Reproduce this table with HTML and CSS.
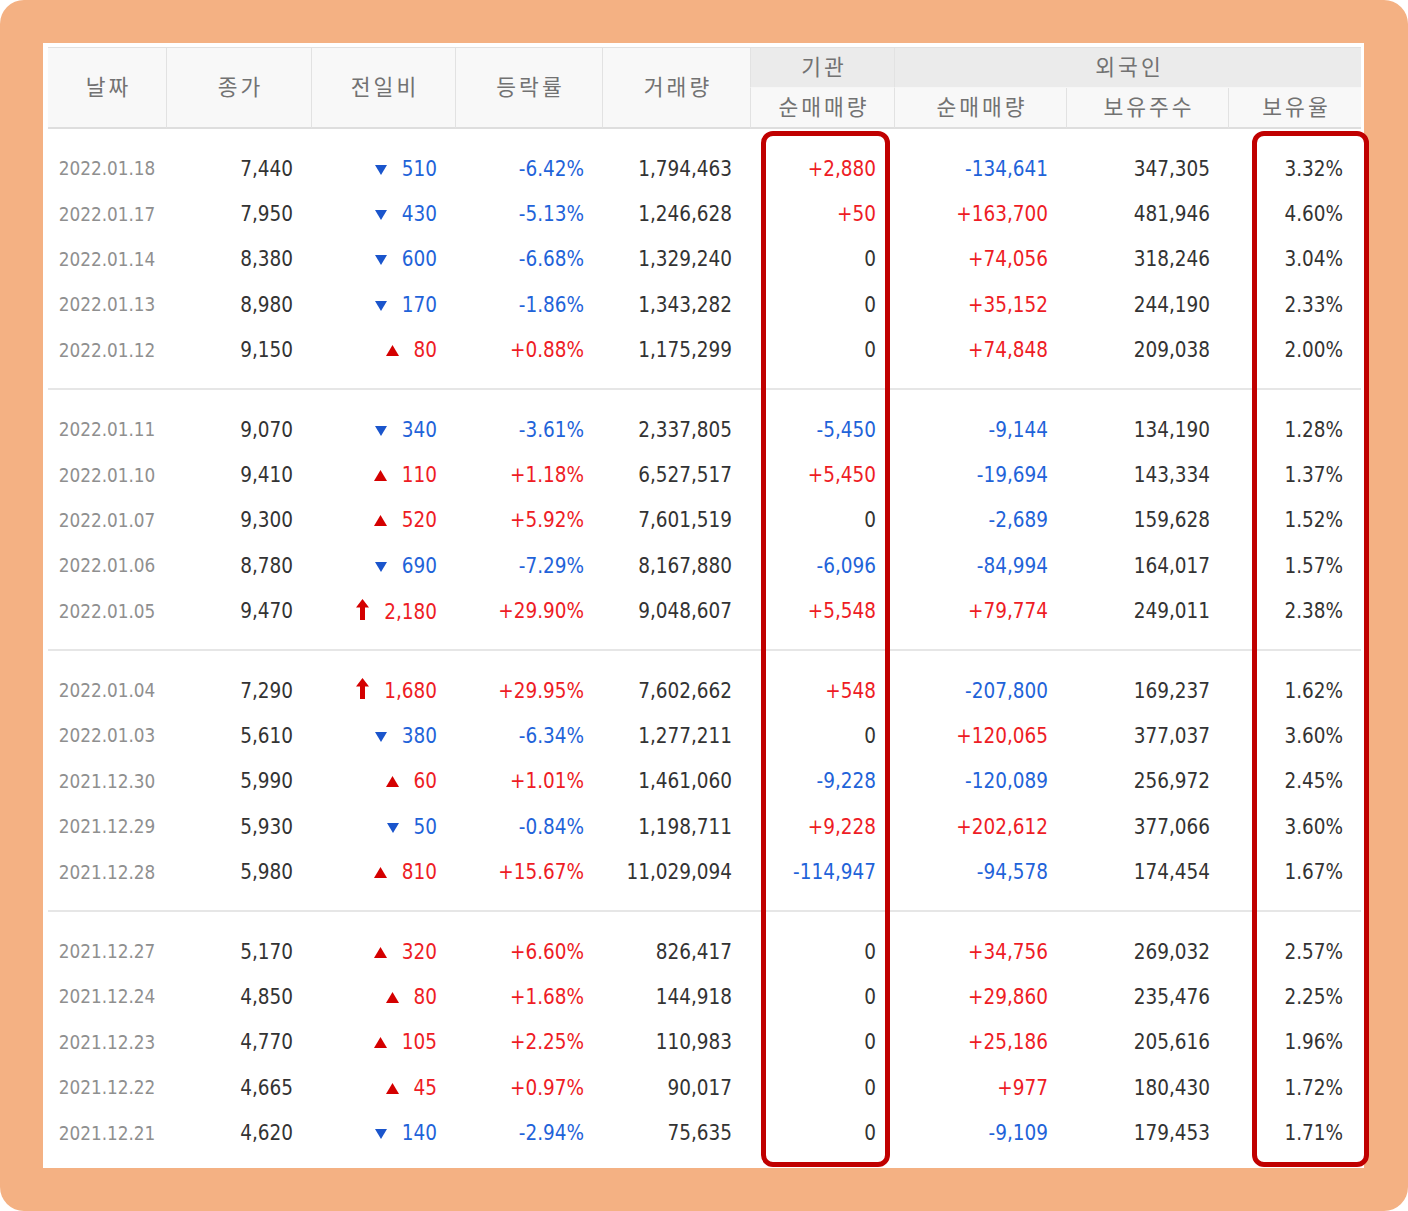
FILE: index.html
```html
<!DOCTYPE html>
<html lang="ko">
<head>
<meta charset="utf-8">
<title>외국인·기관 순매매 거래량</title>
<link rel="stylesheet" href="styles.css">
</head>
<body>
<div class="frame">
  <div class="panel">
    <table class="trade">
      <colgroup>
        <col class="c1"><col class="c2"><col class="c3"><col class="c4"><col class="c5"><col class="c6"><col class="c7"><col class="c8"><col class="c9">
      </colgroup>
      <thead>
        <tr class="h1">
          <th rowspan="2" class="first">날짜</th>
          <th rowspan="2">종가</th>
          <th rowspan="2">전일비</th>
          <th rowspan="2">등락률</th>
          <th rowspan="2">거래량</th>
          <th class="grp">기관</th>
          <th colspan="3" class="grp">외국인</th>
        </tr>
        <tr class="h2">
          <th>순매매량</th>
          <th>순매매량</th>
          <th>보유주수</th>
          <th>보유율</th>
        </tr>
      </thead>
      <tbody>
        <tr class="gap"><td colspan="9"></td></tr>
        <tr class="r"><td class="date">2022.01.18</td><td>7,440</td><td class="blue"><svg class="tri" width="12" height="10" viewBox="0 0 12 10"><path d="M0 0H12L6 10Z"/></svg>510</td><td class="blue">-6.42%</td><td>1,794,463</td><td class="red">+2,880</td><td class="blue">-134,641</td><td>347,305</td><td>3.32%</td></tr>
        <tr class="r"><td class="date">2022.01.17</td><td>7,950</td><td class="blue"><svg class="tri" width="12" height="10" viewBox="0 0 12 10"><path d="M0 0H12L6 10Z"/></svg>430</td><td class="blue">-5.13%</td><td>1,246,628</td><td class="red">+50</td><td class="red">+163,700</td><td>481,946</td><td>4.60%</td></tr>
        <tr class="r"><td class="date">2022.01.14</td><td>8,380</td><td class="blue"><svg class="tri" width="12" height="10" viewBox="0 0 12 10"><path d="M0 0H12L6 10Z"/></svg>600</td><td class="blue">-6.68%</td><td>1,329,240</td><td>0</td><td class="red">+74,056</td><td>318,246</td><td>3.04%</td></tr>
        <tr class="r"><td class="date">2022.01.13</td><td>8,980</td><td class="blue"><svg class="tri" width="12" height="10" viewBox="0 0 12 10"><path d="M0 0H12L6 10Z"/></svg>170</td><td class="blue">-1.86%</td><td>1,343,282</td><td>0</td><td class="red">+35,152</td><td>244,190</td><td>2.33%</td></tr>
        <tr class="r"><td class="date">2022.01.12</td><td>9,150</td><td class="red"><svg class="tri" width="13" height="11" viewBox="0 0 13 11"><path d="M6.5 0L13 11H0Z"/></svg>80</td><td class="red">+0.88%</td><td>1,175,299</td><td>0</td><td class="red">+74,848</td><td>209,038</td><td>2.00%</td></tr>
        <tr class="gap2"><td colspan="9"></td></tr>
        <tr class="sep"><td colspan="9"></td></tr>
      </tbody>
      <tbody>
        <tr class="gap"><td colspan="9"></td></tr>
        <tr class="r"><td class="date">2022.01.11</td><td>9,070</td><td class="blue"><svg class="tri" width="12" height="10" viewBox="0 0 12 10"><path d="M0 0H12L6 10Z"/></svg>340</td><td class="blue">-3.61%</td><td>2,337,805</td><td class="blue">-5,450</td><td class="blue">-9,144</td><td>134,190</td><td>1.28%</td></tr>
        <tr class="r"><td class="date">2022.01.10</td><td>9,410</td><td class="red"><svg class="tri" width="13" height="11" viewBox="0 0 13 11"><path d="M6.5 0L13 11H0Z"/></svg>110</td><td class="red">+1.18%</td><td>6,527,517</td><td class="red">+5,450</td><td class="blue">-19,694</td><td>143,334</td><td>1.37%</td></tr>
        <tr class="r"><td class="date">2022.01.07</td><td>9,300</td><td class="red"><svg class="tri" width="13" height="11" viewBox="0 0 13 11"><path d="M6.5 0L13 11H0Z"/></svg>520</td><td class="red">+5.92%</td><td>7,601,519</td><td>0</td><td class="blue">-2,689</td><td>159,628</td><td>1.52%</td></tr>
        <tr class="r"><td class="date">2022.01.06</td><td>8,780</td><td class="blue"><svg class="tri" width="12" height="10" viewBox="0 0 12 10"><path d="M0 0H12L6 10Z"/></svg>690</td><td class="blue">-7.29%</td><td>8,167,880</td><td class="blue">-6,096</td><td class="blue">-84,994</td><td>164,017</td><td>1.57%</td></tr>
        <tr class="r"><td class="date">2022.01.05</td><td>9,470</td><td class="red"><svg class="arrow" width="13" height="21" viewBox="0 0 13 21"><path d="M6.5 0L13 8.5H9V21H4V8.5H0Z"/></svg>2,180</td><td class="red">+29.90%</td><td>9,048,607</td><td class="red">+5,548</td><td class="red">+79,774</td><td>249,011</td><td>2.38%</td></tr>
        <tr class="gap2"><td colspan="9"></td></tr>
        <tr class="sep"><td colspan="9"></td></tr>
      </tbody>
      <tbody>
        <tr class="gap"><td colspan="9"></td></tr>
        <tr class="r"><td class="date">2022.01.04</td><td>7,290</td><td class="red"><svg class="arrow" width="13" height="21" viewBox="0 0 13 21"><path d="M6.5 0L13 8.5H9V21H4V8.5H0Z"/></svg>1,680</td><td class="red">+29.95%</td><td>7,602,662</td><td class="red">+548</td><td class="blue">-207,800</td><td>169,237</td><td>1.62%</td></tr>
        <tr class="r"><td class="date">2022.01.03</td><td>5,610</td><td class="blue"><svg class="tri" width="12" height="10" viewBox="0 0 12 10"><path d="M0 0H12L6 10Z"/></svg>380</td><td class="blue">-6.34%</td><td>1,277,211</td><td>0</td><td class="red">+120,065</td><td>377,037</td><td>3.60%</td></tr>
        <tr class="r"><td class="date">2021.12.30</td><td>5,990</td><td class="red"><svg class="tri" width="13" height="11" viewBox="0 0 13 11"><path d="M6.5 0L13 11H0Z"/></svg>60</td><td class="red">+1.01%</td><td>1,461,060</td><td class="blue">-9,228</td><td class="blue">-120,089</td><td>256,972</td><td>2.45%</td></tr>
        <tr class="r"><td class="date">2021.12.29</td><td>5,930</td><td class="blue"><svg class="tri" width="12" height="10" viewBox="0 0 12 10"><path d="M0 0H12L6 10Z"/></svg>50</td><td class="blue">-0.84%</td><td>1,198,711</td><td class="red">+9,228</td><td class="red">+202,612</td><td>377,066</td><td>3.60%</td></tr>
        <tr class="r"><td class="date">2021.12.28</td><td>5,980</td><td class="red"><svg class="tri" width="13" height="11" viewBox="0 0 13 11"><path d="M6.5 0L13 11H0Z"/></svg>810</td><td class="red">+15.67%</td><td>11,029,094</td><td class="blue">-114,947</td><td class="blue">-94,578</td><td>174,454</td><td>1.67%</td></tr>
        <tr class="gap2"><td colspan="9"></td></tr>
        <tr class="sep"><td colspan="9"></td></tr>
      </tbody>
      <tbody>
        <tr class="gap"><td colspan="9"></td></tr>
        <tr class="r"><td class="date">2021.12.27</td><td>5,170</td><td class="red"><svg class="tri" width="13" height="11" viewBox="0 0 13 11"><path d="M6.5 0L13 11H0Z"/></svg>320</td><td class="red">+6.60%</td><td>826,417</td><td>0</td><td class="red">+34,756</td><td>269,032</td><td>2.57%</td></tr>
        <tr class="r"><td class="date">2021.12.24</td><td>4,850</td><td class="red"><svg class="tri" width="13" height="11" viewBox="0 0 13 11"><path d="M6.5 0L13 11H0Z"/></svg>80</td><td class="red">+1.68%</td><td>144,918</td><td>0</td><td class="red">+29,860</td><td>235,476</td><td>2.25%</td></tr>
        <tr class="r"><td class="date">2021.12.23</td><td>4,770</td><td class="red"><svg class="tri" width="13" height="11" viewBox="0 0 13 11"><path d="M6.5 0L13 11H0Z"/></svg>105</td><td class="red">+2.25%</td><td>110,983</td><td>0</td><td class="red">+25,186</td><td>205,616</td><td>1.96%</td></tr>
        <tr class="r"><td class="date">2021.12.22</td><td>4,665</td><td class="red"><svg class="tri" width="13" height="11" viewBox="0 0 13 11"><path d="M6.5 0L13 11H0Z"/></svg>45</td><td class="red">+0.97%</td><td>90,017</td><td>0</td><td class="red">+977</td><td>180,430</td><td>1.72%</td></tr>
        <tr class="r"><td class="date">2021.12.21</td><td>4,620</td><td class="blue"><svg class="tri" width="12" height="10" viewBox="0 0 12 10"><path d="M0 0H12L6 10Z"/></svg>140</td><td class="blue">-2.94%</td><td>75,635</td><td>0</td><td class="blue">-9,109</td><td>179,453</td><td>1.71%</td></tr>
        <tr class="gap2"><td colspan="9"></td></tr>
      </tbody>
    </table>
  </div>
  <div class="mark mark-inst"></div>
  <div class="mark mark-rate"></div>
</div>
</body>
</html>
```

FILE: styles.css
```css
html, body {
  margin: 0;
  padding: 0;
  background: #ffffff;
}

.frame {
  position: relative;
  width: 1408px;
  height: 1211px;
  box-sizing: border-box;
  padding: 43px 44px 43px 43px;
  background: #f4b183;
  border-radius: 24px;
}

.panel {
  height: 1125px;
  box-sizing: border-box;
  padding: 4px 3px 0 5px;
  background: #ffffff;
  overflow: hidden;
}

.trade {
  width: 1313px;
  table-layout: fixed;
  border-collapse: separate;
  border-spacing: 0;
  border-top: 1px solid #e1e1e1;
  font-family: "DejaVu Sans Condensed", "Liberation Sans", sans-serif;
  font-size: 20.5px;
  color: #333333;
}

.c1 { width: 118px; }
.c2 { width: 145px; }
.c3 { width: 144px; }
.c4 { width: 147px; }
.c5 { width: 148px; }
.c6 { width: 144px; }
.c7 { width: 172px; }
.c8 { width: 162px; }
.c9 { width: 133px; }

.trade th {
  box-sizing: border-box;
  padding: 0 0 4px 3px;
  font-family: "Noto Sans CJK KR", "Noto Sans", sans-serif;
  font-weight: 400;
  font-size: 21.5px;
  letter-spacing: 3px;
  color: #727272;
  background: #f8f8f8;
  border-left: 1px solid #e2e2e2;
  text-align: center;
}

.trade th.first {
  border-left: 0;
}

.trade thead tr.h1 th {
  height: 40px;
}

.trade thead tr.h1 th[rowspan] {
  border-bottom: 2px solid #dedede;
}

.trade thead tr.h1 th.grp {
  background: #ebebeb;
  border-bottom: 1px solid #f6f6f6;
}

.trade thead tr.h2 th {
  height: 41px;
  border-bottom: 2px solid #dedede;
}

.trade thead tr.h2 th:first-child {
  border-left: 1px solid #e2e2e2;
}

.trade td {
  box-sizing: border-box;
  padding: 0 18px 0 0;
  text-align: right;
  white-space: nowrap;
}

.trade tr.r td {
  height: 45.4px;
}

.trade td.date {
  padding: 0;
  text-align: center;
  font-size: 18.8px;
  color: #8f8f8f;
}

.trade td.red { color: #ee1c25; }
.trade td.blue { color: #1f63d9; }

.trade tr.gap td {
  height: 17px;
  padding: 0;
}

.trade tr.gap2 td {
  height: 15px;
  padding: 0;
}

.trade tr.sep td {
  height: 2px;
  padding: 0;
  background: #e6e6e6;
}

.tri {
  vertical-align: 1px;
  margin-right: 15px;
}

.blue .tri { fill: #1a55cc; }
.red .tri { fill: #d40000; }

.arrow {
  vertical-align: -1px;
  margin-right: 15px;
  fill: #d40000;
}

.mark {
  position: absolute;
  top: 131px;
  height: 1036px;
  box-sizing: border-box;
  border: 5px solid #c00000;
  border-radius: 12px;
}

.mark-inst {
  left: 761px;
  width: 129px;
}

.mark-rate {
  left: 1252px;
  width: 117px;
}
```
